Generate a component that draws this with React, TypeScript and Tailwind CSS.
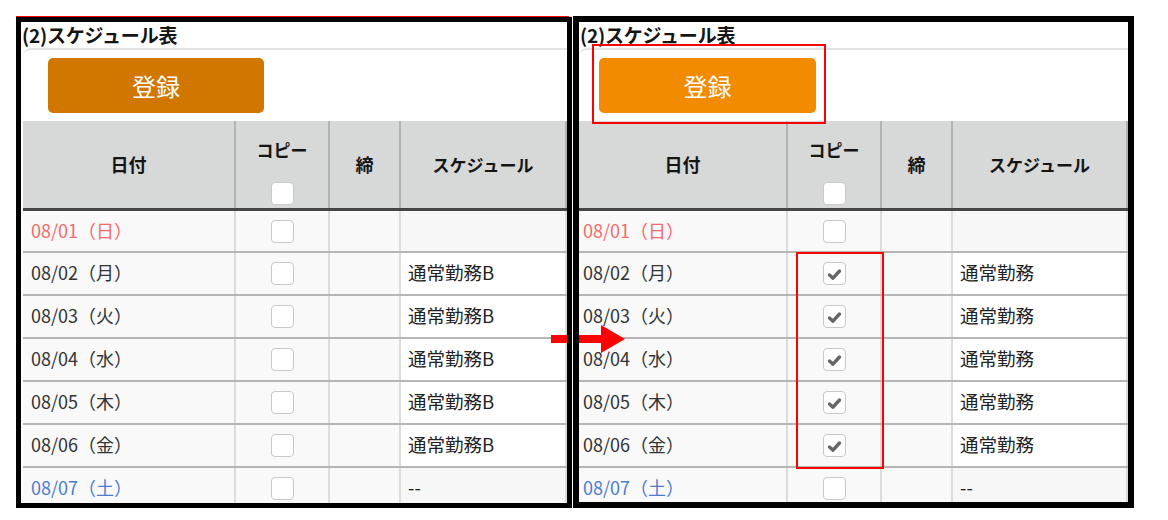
import React from 'react';

type Tone = 'sun' | 'sat' | 'normal';

interface DayRow {
    date: string;
    tone: Tone;
    before: string;
    after: string;
    checked: boolean;
}

const rows: DayRow[] = [
    { date: '08/01（日）', tone: 'sun', before: '', after: '', checked: false },
    { date: '08/02（月）', tone: 'normal', before: '通常勤務B', after: '通常勤務', checked: true },
    { date: '08/03（火）', tone: 'normal', before: '通常勤務B', after: '通常勤務', checked: true },
    { date: '08/04（水）', tone: 'normal', before: '通常勤務B', after: '通常勤務', checked: true },
    { date: '08/05（木）', tone: 'normal', before: '通常勤務B', after: '通常勤務', checked: true },
    { date: '08/06（金）', tone: 'normal', before: '通常勤務B', after: '通常勤務', checked: true },
    { date: '08/07（土）', tone: 'sat', before: '--', after: '--', checked: false },
];

const toneClass: Record<Tone, string> = {
    sun: 'text-[#f26b6b]',
    sat: 'text-[#4d7ccf]',
    normal: 'text-[#333]',
};

const CheckBox: React.FC<{ checked?: boolean }> = ({ checked }) => (
    <div className="w-[23px] h-[23px] rounded-[4px] border border-[#c9c9c9] bg-white flex items-center justify-center">
        {checked && (
            <svg width="17" height="17" viewBox="0 0 17 17">
                <path d="M3.5 10 L7 13.2 L13.5 6" fill="none" stroke="#666" strokeWidth="3.4" strokeLinecap="round" strokeLinejoin="round" />
            </svg>
        )}
    </div>
);

interface ScheduleCardProps {
    after?: boolean;
}

const ScheduleCard: React.FC<ScheduleCardProps> = ({ after }) => {
    // column widths differ a little between the two screens
    const cols = after ? ['w-[209px]', 'w-[94px]', 'w-[71px]'] : ['w-[213px]', 'w-[94px]', 'w-[71px]'];
    const datePad = after ? 'pl-[4px]' : 'pl-[8px]';

    return (
        <div
            className={`flex flex-col overflow-hidden border-black bg-white ${
                after ? 'w-[561px] h-[492px] border-[6px]' : 'w-[556px] h-[491px] mt-px border-[5px]'
            }`}
        >
            <h2 className="h-[26px] leading-[26px] text-[19px] font-bold text-[#151515] tracking-[-0.2px] pl-px">
                (2)スケジュール表
            </h2>
            <div className={`flex-1 border-t-2 border-[#e4e4e4] rounded-tl-[8px] ${after ? '' : 'ml-[2px]'}`}>
                <div className={`pt-[8px] ${after ? 'pl-[20px]' : 'pl-[25px]'}`}>
                    <button
                        className={`h-[55px] rounded-[5px] text-white text-[24px] leading-none ${
                            after ? 'w-[217px] bg-[#f28b00]' : 'w-[216px] bg-[#d17700]'
                        }`}
                    >
                        登録
                    </button>
                </div>

                <div className="mt-[8px]">
                    {/* header */}
                    <div className="flex h-[90px] bg-[#d7d8d8] border-b-[3px] border-[#454545] text-[17px] font-bold text-[#151515]">
                        <div className={`${cols[0]} border-r-2 border-[#b3b3b3] flex items-center justify-center text-[18px]`}>日付</div>
                        <div className={`${cols[1]} border-r-2 border-[#b3b3b3] flex flex-col items-center pt-[17px]`}>
                            <span className="leading-[24px]">コピー</span>
                            <div className="mt-[20px]">
                                <CheckBox />
                            </div>
                        </div>
                        <div className={`${cols[2]} border-r-2 border-[#b3b3b3] flex items-center justify-center text-[18px]`}>締</div>
                        <div className="flex-1 border-r-2 border-[#b3b3b3] flex items-center justify-center">スケジュール</div>
                    </div>

                    {/* body */}
                    {rows.map((row, i) => {
                        const text = after ? row.after : row.before;
                        const plain = row.tone !== 'normal';
                        return (
                            <div
                                key={row.date}
                                className={`flex border-b-2 border-[#b6b6b6] text-[18px] ${i === 0 ? 'h-[42px]' : 'h-[43px]'}`}
                            >
                                <div className={`${cols[0]} ${datePad} pb-[2px] bg-[#f9f9f9] border-r-2 border-[#dcdcdc] flex items-center ${toneClass[row.tone]}`}>
                                    {row.date}
                                </div>
                                <div className={`${cols[1]} bg-[#f9f9f9] border-r-2 border-[#dcdcdc] flex items-center justify-center`}>
                                    <CheckBox checked={after && row.checked} />
                                </div>
                                <div className={`${cols[2]} bg-[#f9f9f9] border-r-2 border-[#dcdcdc]`} />
                                <div
                                    className={`flex-1 pl-[7px] pb-[2px] border-r-2 border-[#dcdcdc] flex items-center text-[18.5px] text-[#222] ${
                                        plain ? 'bg-[#f7f7f7]' : 'bg-white'
                                    }`}
                                >
                                    {text}
                                </div>
                            </div>
                        );
                    })}
                </div>
            </div>
        </div>
    );
};

const App: React.FC = () => {
    return (
        <div className="relative w-[1168px] h-[520px] bg-white overflow-hidden font-['Noto_Sans_CJK_JP','Noto_Sans',sans-serif]">
            <div className="flex items-start gap-px pt-[16px] pl-[16px]">
                <ScheduleCard />
                <ScheduleCard after />
            </div>

            {/* red markers */}
            <div className="absolute left-[16px] top-[16px] w-[553px] h-px bg-[#ff0000]" />
            <div className="absolute left-[592px] top-[44px] w-[234px] h-[80px] border-2 border-[#ff0000]" />
            <div className="absolute left-[796px] top-[252px] w-[88px] h-[217px] border-2 border-[#ff0000]" />

            <svg className="absolute left-[551px] top-[324px]" width="76" height="30" viewBox="0 0 76 30">
                <rect x="0" y="11" width="16" height="8" fill="#ff0000" />
                <rect x="28" y="11" width="24" height="8" fill="#ff0000" />
                <polygon points="50,1 74,15 50,29" fill="#ff0000" />
            </svg>
        </div>
    );
};

export default App;
